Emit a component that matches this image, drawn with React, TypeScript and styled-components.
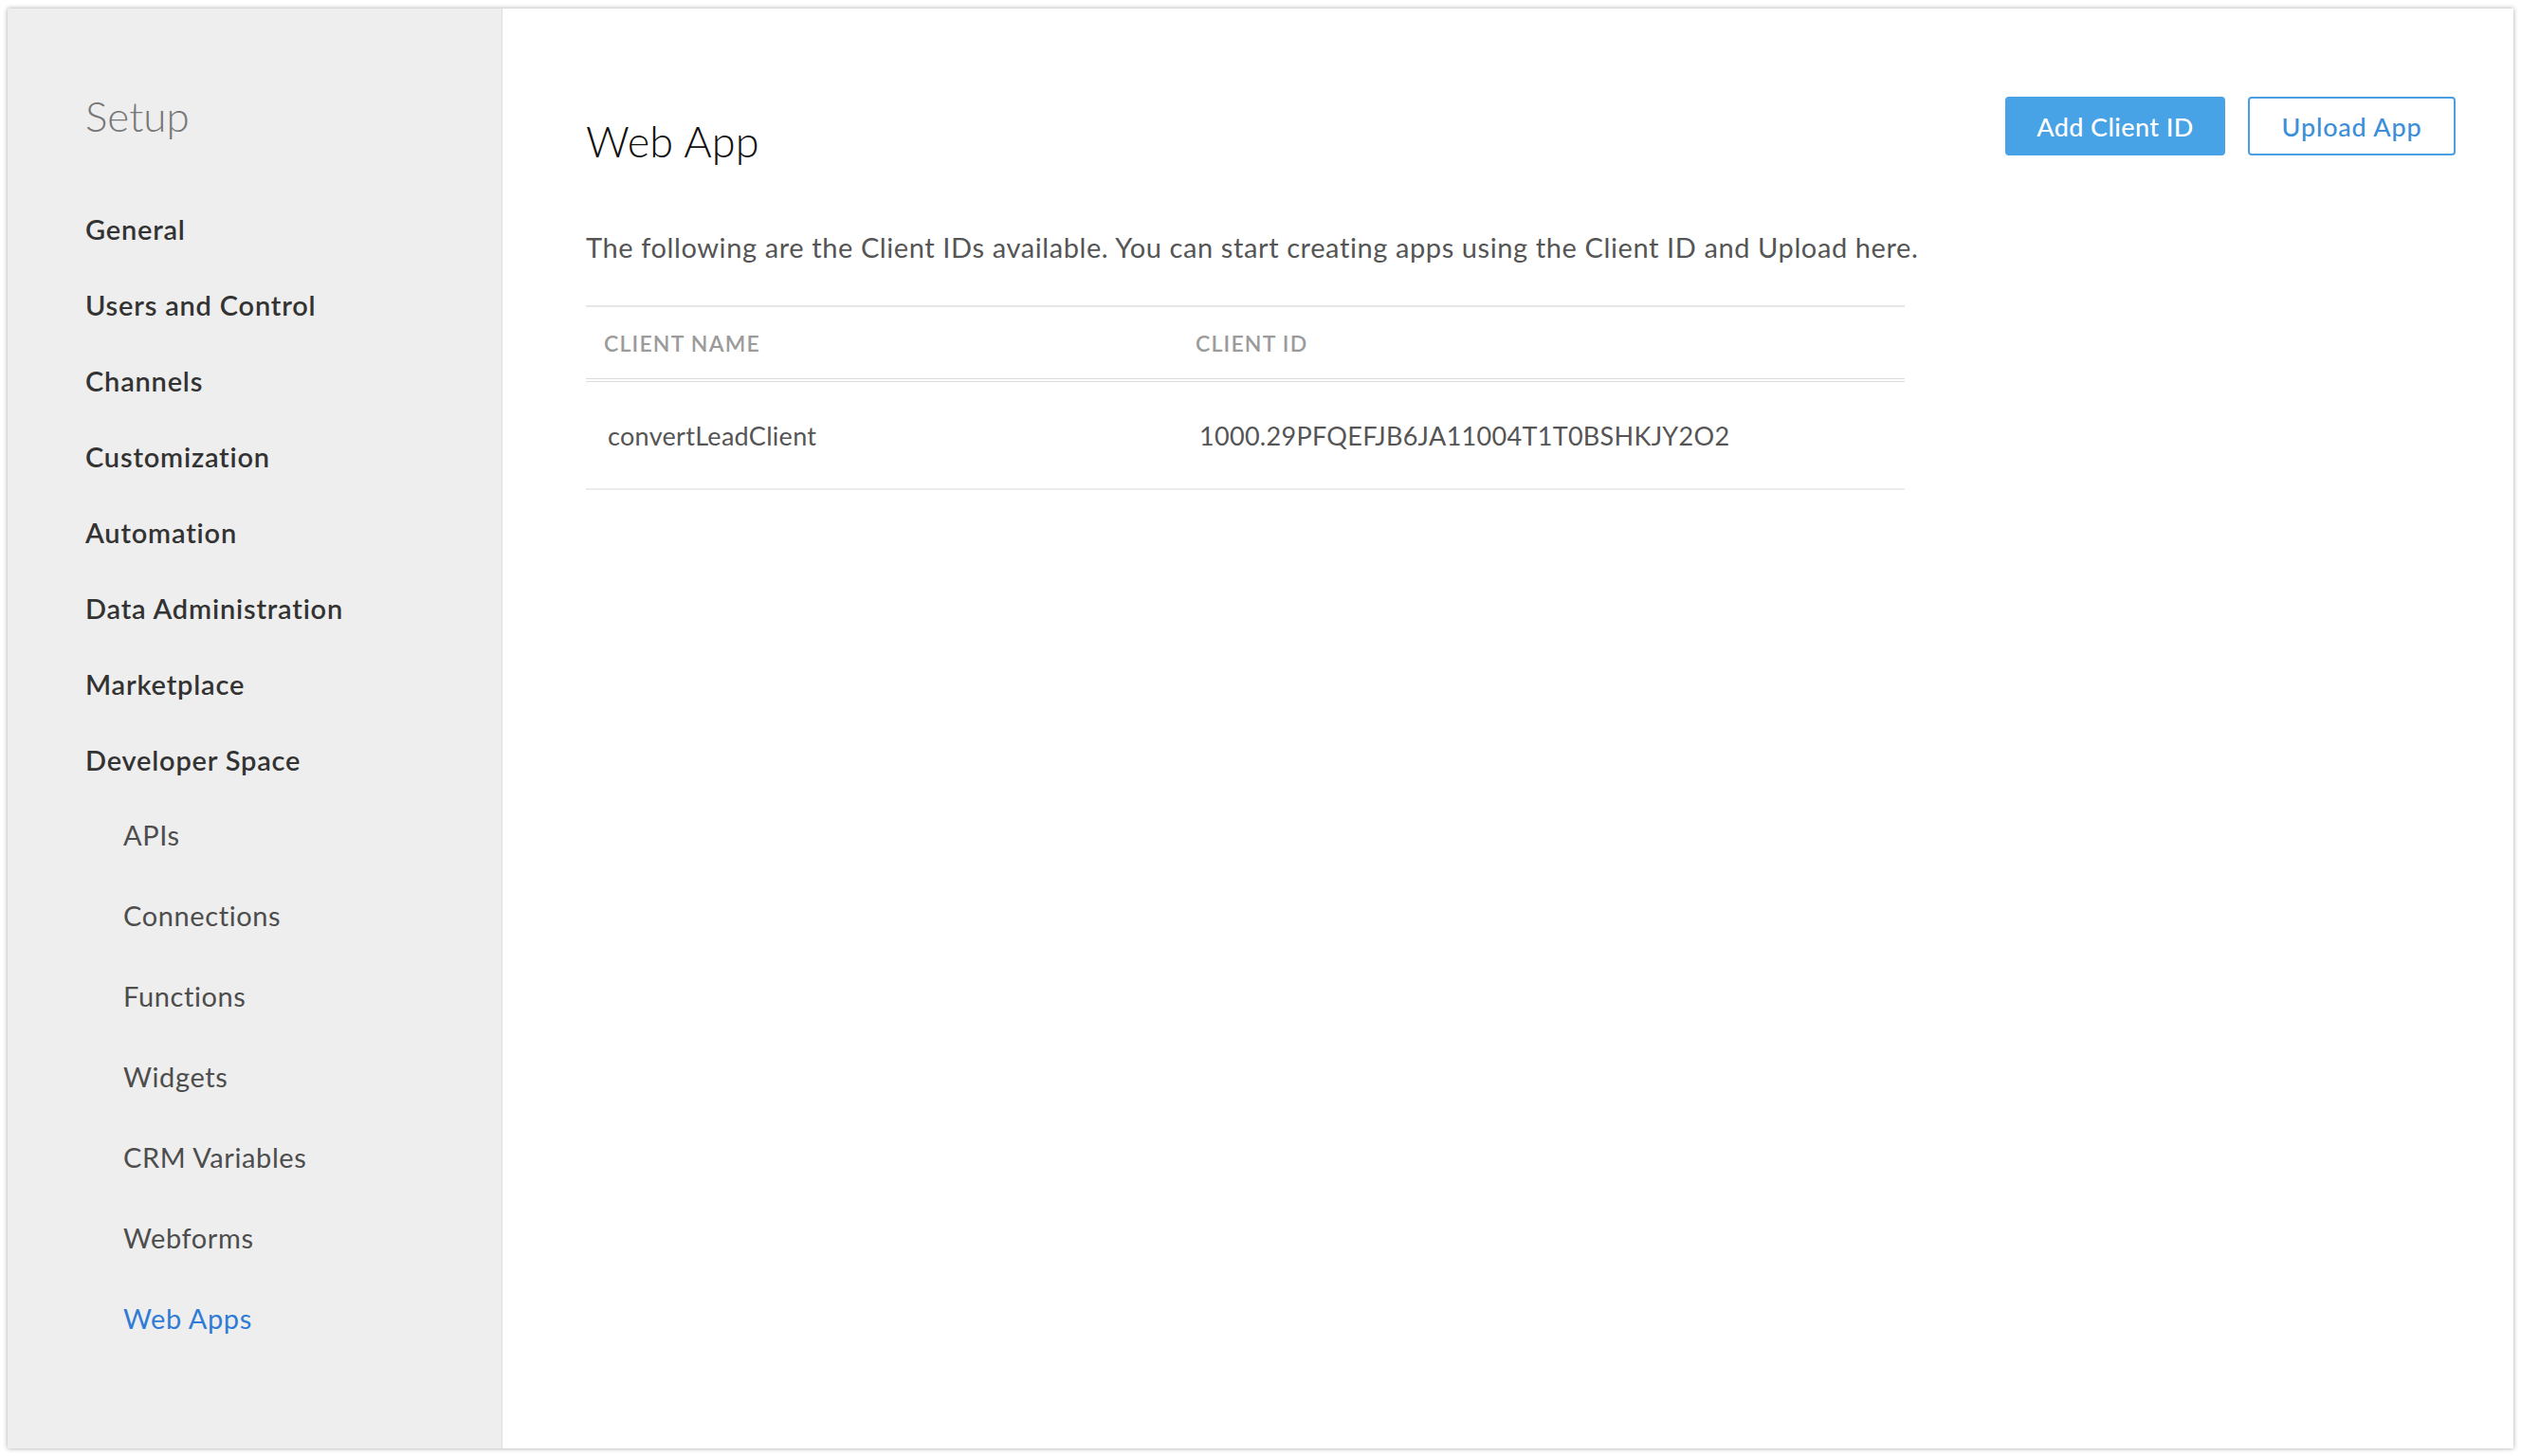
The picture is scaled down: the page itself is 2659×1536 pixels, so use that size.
import React from 'react';
import styled, { createGlobalStyle } from 'styled-components';

const GlobalStyle = createGlobalStyle`
  html, body {
    margin: 0;
    padding: 0;
    height: 100%;
    background: #ffffff;
  }
  body {
    font-family: Lato, "Open Sans", sans-serif;
  }
  #root {
    height: 100%;
  }
`;

const mainNav = [
  'General',
  'Users and Control',
  'Channels',
  'Customization',
  'Automation',
  'Data Administration',
  'Marketplace',
  'Developer Space'
];

const devNav = [
  'APIs',
  'Connections',
  'Functions',
  'Widgets',
  'CRM Variables',
  'Webforms',
  'Web Apps'
];

const clients = [
  { name: 'convertLeadClient', id: '1000.29PFQEFJB6JA11004T1T0BSHKJY2O2' }
];

export default function App() {
  return (
    <>
      <GlobalStyle />
      <Window>
        <Sidebar>
          <SidebarTitle>Setup</SidebarTitle>
          <NavList>
            {mainNav.map((item) => (
              <NavItem key={item}>{item}</NavItem>
            ))}
          </NavList>
          <SubNavList>
            {devNav.map((item) => (
              <SubNavItem key={item} active={item === 'Web Apps'}>
                {item}
              </SubNavItem>
            ))}
          </SubNavList>
        </Sidebar>

        <Content>
          <HeaderRow>
            <PageTitle>Web App</PageTitle>
            <Actions>
              <PrimaryButton>Add Client ID</PrimaryButton>
              <OutlineButton>Upload App</OutlineButton>
            </Actions>
          </HeaderRow>

          <Description>
            The following are the Client IDs available. You can start creating
            apps using the Client ID and Upload here.
          </Description>

          <Table>
            <HeadRow>
              <HeadCell>CLIENT NAME</HeadCell>
              <HeadCell>CLIENT ID</HeadCell>
            </HeadRow>
            {clients.map((c) => (
              <BodyRow key={c.id}>
                <BodyCell>{c.name}</BodyCell>
                <BodyCell>{c.id}</BodyCell>
              </BodyRow>
            ))}
          </Table>
        </Content>
      </Window>
    </>
  );
}

const Window = styled.div`
  display: flex;
  box-sizing: border-box;
  margin: 9px 8px 0 8px;
  height: 1519px;
  background: #ffffff;
  box-shadow: 0 0 5px rgba(0, 0, 0, 0.35);
  overflow: hidden;
`;

const Sidebar = styled.aside`
  width: 522px;
  flex-shrink: 0;
  box-sizing: border-box;
  padding: 83px 0 0 82px;
  background: #eeeeee;
  border-right: 1px solid #dedede;
`;

const SidebarTitle = styled.h2`
  margin: 0 0 49px 0;
  font-size: 44px;
  line-height: 60px;
  font-weight: 300;
  color: #777777;
`;

const NavList = styled.ul`
  list-style: none;
  margin: 0;
  padding: 0;
`;

const NavItem = styled.li`
  height: 80px;
  display: flex;
  align-items: center;
  font-size: 29px;
  letter-spacing: 0.8px;
  font-weight: 600;
  color: #333333;
`;

const SubNavList = styled.ul`
  list-style: none;
  margin: -3px 0 0 0;
  padding: 0 0 0 40px;
`;

const SubNavItem = styled.li<{ active?: boolean }>`
  height: 85px;
  display: flex;
  align-items: center;
  font-size: 29px;
  letter-spacing: 0.6px;
  font-weight: 400;
  color: ${(p) => (p.active ? '#2f7bd6' : '#4d4d4d')};
`;

const Content = styled.main`
  flex: 1;
  box-sizing: border-box;
  padding: 93px 61px 0 88px;
`;

const HeaderRow = styled.div`
  display: flex;
  justify-content: space-between;
  align-items: flex-start;
`;

const PageTitle = styled.h1`
  margin: 17px 0 0 0;
  font-size: 45px;
  letter-spacing: 0.2px;
  line-height: 60px;
  font-weight: 300;
  color: #111111;
`;

const Actions = styled.div`
  display: flex;
  gap: 24px;
`;

const ButtonBase = styled.button`
  box-sizing: border-box;
  height: 62px;
  padding: 0;
  border-radius: 4px;
  font-family: Lato, "Open Sans", sans-serif;
  font-size: 27px;
  letter-spacing: 0.4px;
  font-weight: 500;
  cursor: pointer;
`;

const PrimaryButton = styled(ButtonBase)`
  width: 232px;
  background: #47a2e6;
  border: 2px solid #47a2e6;
  color: #ffffff;
`;

const OutlineButton = styled(ButtonBase)`
  width: 219px;
  background: #ffffff;
  border: 2px solid #4a9ee2;
  color: #3d8fd8;
  letter-spacing: 0.8px;
`;

const Description = styled.p`
  margin: 62px 0 0 0;
  font-size: 29px;
  letter-spacing: 0.6px;
  line-height: 40px;
  color: #555555;
`;

const Table = styled.div`
  width: 1391px;
  margin-top: 41px;
  border-top: 2px solid #e6e6e6;
`;

const HeadRow = styled.div`
  display: grid;
  grid-template-columns: 624px 1fr;
  height: 75px;
  align-items: center;
  border-bottom: 4px double #dcdcdc;
`;

const HeadCell = styled.div`
  padding-left: 19px;
  font-size: 23px;
  letter-spacing: 1.2px;
  font-weight: 600;
  color: #9b9b9b;
`;

const BodyRow = styled.div`
  display: grid;
  grid-template-columns: 624px 1fr;
  height: 112px;
  align-items: center;
  border-bottom: 2px solid #ececec;
`;

const BodyCell = styled.div`
  padding-left: 23px;
  font-size: 27px;
  letter-spacing: 0.3px;
  color: #555555;
`;
